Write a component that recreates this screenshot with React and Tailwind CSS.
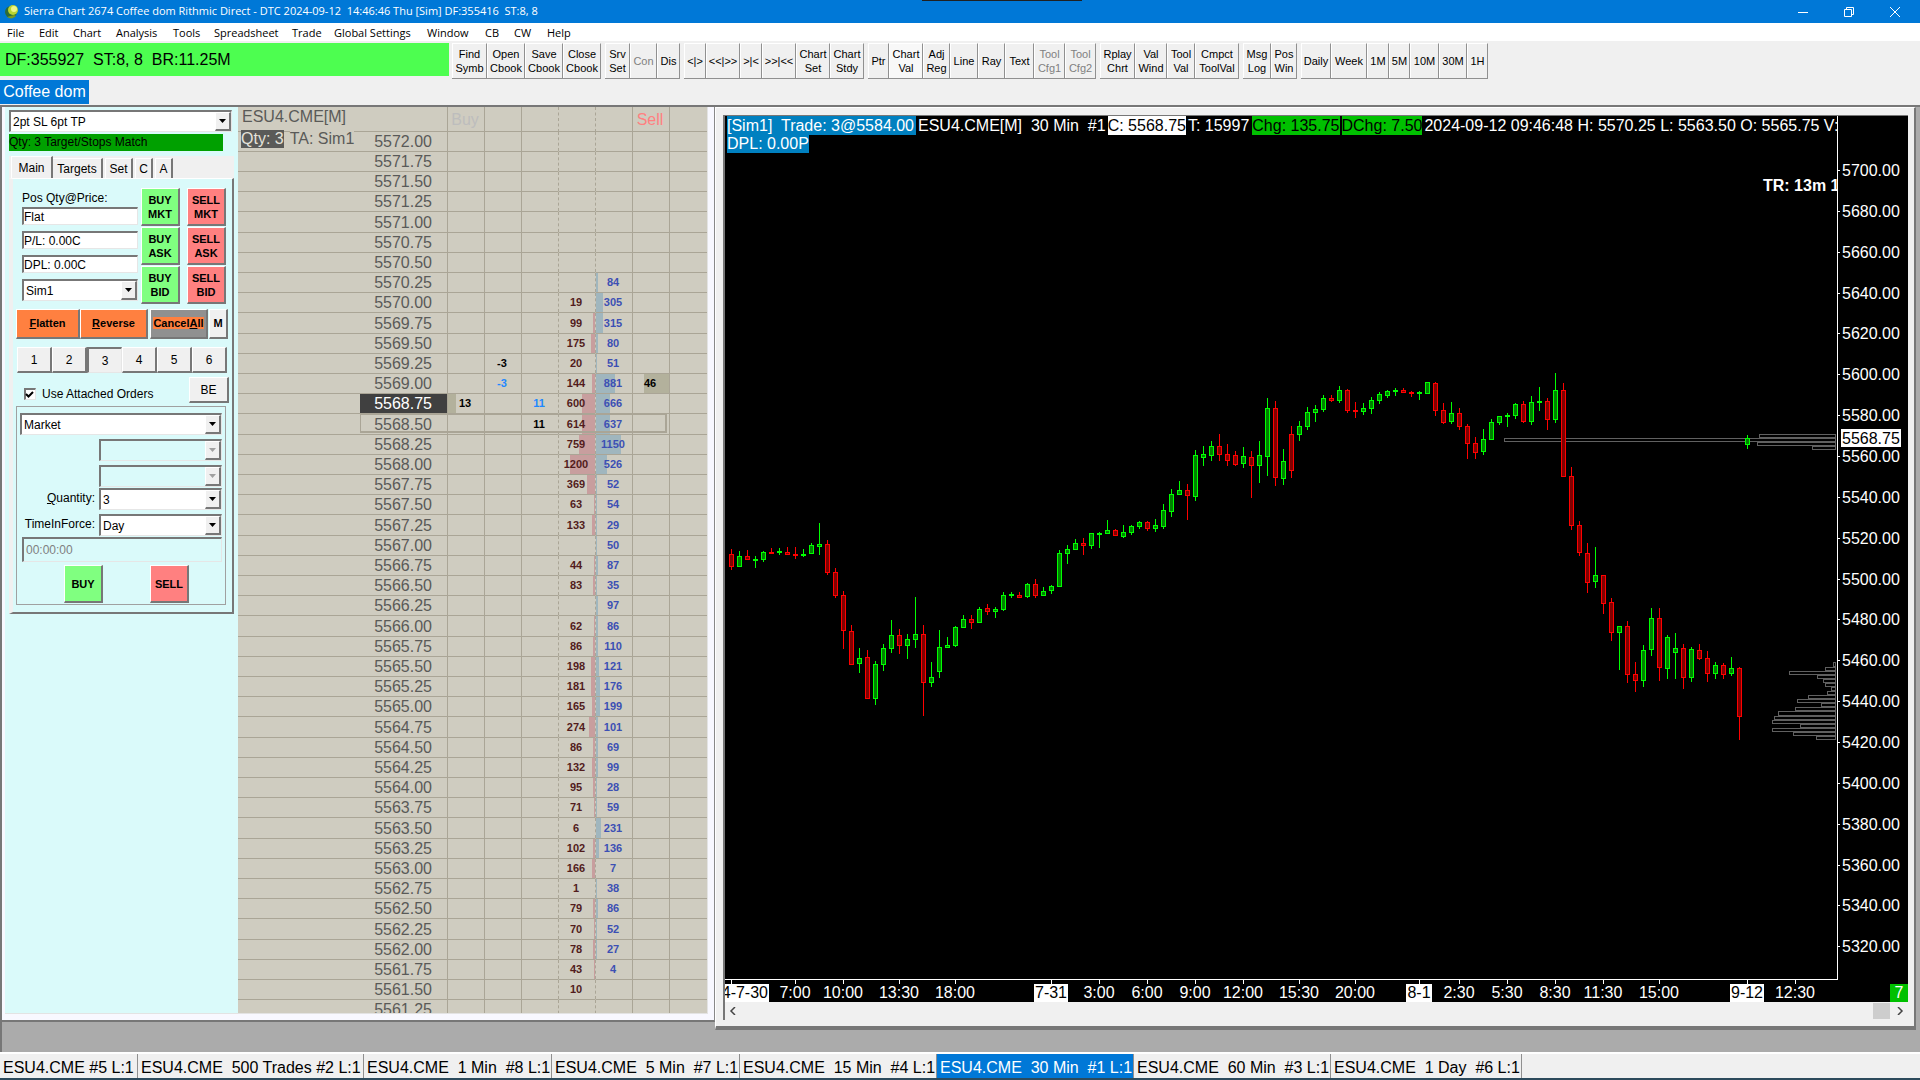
import clsx from "clsx";

const MENU = [
  ["File", "w-8"],
  ["Edit", "w-[34px]"],
  ["Chart", "w-[43px]"],
  ["Analysis", "w-[57px]"],
  ["Tools", "w-[41px]"],
  ["Spreadsheet", "w-[78px]"],
  ["Trade", "w-[42px]"],
  ["Global Settings", "w-[93px]"],
  ["Window", "w-[58px]"],
  ["CB", "w-[29px]"],
  ["CW", "w-[33px]"],
  ["Help", "w-10"],
];

const TOOLBAR = [
  [
    ["Find Symb", "w-[35px]"],
    ["Open Cbook", "w-[38px]"],
    ["Save Cbook", "w-[38px]"],
    ["Close Cbook", "w-[38px]"],
  ],
  [
    ["Srv Set", "w-[25px]"],
    ["Con", "w-[27px]", "off"],
    ["Dis", "w-[23px]"],
  ],
  [
    ["<|>", "w-[22px]"],
    ["<<|>>", "w-[34px]"],
    [">|<", "w-[22px]"],
    [">>|<<", "w-[34px]"],
    ["Chart Set", "w-[34px]"],
    ["Chart Stdy", "w-[34px]"],
  ],
  [
    ["Ptr", "w-[21px]"],
    ["Chart Val", "w-[34px]", "on"],
    ["Adj Reg", "w-[27px]"],
    ["Line", "w-7"],
    ["Ray", "w-[27px]"],
    ["Text", "w-[29px]"],
    ["Tool Cfg1", "w-[31px]", "off"],
    ["Tool Cfg2", "w-[31px]", "off"],
  ],
  [
    ["Rplay Chrt", "w-[35px]"],
    ["Val Wind", "w-8"],
    ["Tool Val", "w-7"],
    ["Cmpct ToolVal", "w-11"],
  ],
  [
    ["Msg Log", "w-7"],
    ["Pos Win", "w-[26px]"],
  ],
  [
    ["Daily", "w-[30px]"],
    ["Week", "w-9"],
    ["1M", "w-[22px]"],
    ["5M", "w-[21px]"],
    ["10M", "w-[29px]"],
    ["30M", "w-7"],
    ["1H", "w-[21px]"],
  ],
];

// one entry per quarter point, from 5572.00 down: [bid size, ask size]
const DEPTH = [
  [], [], [], [], [], [], [],
  [null, 84], [19, 305], [99, 315], [175, 80], [20, 51], [144, 881], [600, 666], [614, 637],
  [759, 1150], [1200, 526], [369, 52], [63, 54], [133, 29], [null, 50], [44, 87], [83, 35],
  [null, 97], [62, 86], [86, 110], [198, 121], [181, 176], [165, 199], [274, 101], [86, 69],
  [132, 99], [95, 28], [71, 59], [6, 231], [102, 136], [166, 7], [1, 38], [79, 86],
  [70, 52], [78, 27], [43, 4], [10, null], [],
];

// [up, high, body top, body bottom, low] in plot pixels
const CANDLES = [
  [0, 433, 438, 451, 454], [1, 435, 440, 451, 451], [0, 434, 440, 444, 444], [1, 440, 443, 444, 452],
  [1, 435, 436, 444, 446], [0, 432, 436, 437, 438], [1, 432, 435, 437, 439], [0, 431, 436, 439, 439],
  [0, 431, 438, 440, 443], [1, 433, 438, 440, 441], [1, 427, 429, 438, 438], [1, 407, 428, 431, 439],
  [0, 424, 428, 457, 459], [0, 452, 456, 480, 482], [0, 475, 479, 515, 533], [0, 509, 515, 549, 549],
  [1, 532, 542, 548, 557], [0, 534, 541, 583, 583], [1, 545, 548, 583, 589], [1, 528, 532, 549, 555],
  [1, 504, 519, 533, 537], [0, 513, 519, 530, 538], [1, 518, 523, 530, 543], [1, 481, 518, 524, 532],
  [0, 509, 518, 567, 600], [1, 546, 561, 567, 571], [1, 514, 531, 556, 562], [1, 521, 529, 532, 532],
  [1, 510, 511, 530, 531], [1, 499, 503, 512, 512], [0, 499, 503, 507, 513], [1, 491, 493, 507, 507],
  [0, 488, 492, 496, 499], [1, 491, 493, 496, 502], [1, 476, 479, 494, 495], [1, 476, 478, 479, 482],
  [0, 476, 479, 482, 482], [1, 467, 468, 481, 482], [0, 463, 468, 480, 482], [1, 471, 475, 480, 480],
  [1, 469, 470, 475, 478], [1, 434, 437, 471, 471], [1, 429, 433, 438, 448], [1, 423, 427, 434, 434],
  [0, 422, 427, 430, 439], [1, 417, 417, 430, 433], [1, 416, 417, 419, 432], [1, 404, 414, 418, 418],
  [0, 413, 414, 420, 420], [1, 409, 416, 421, 422], [1, 409, 410, 417, 419], [1, 405, 406, 411, 413],
  [0, 405, 406, 413, 415], [1, 403, 409, 413, 416], [1, 388, 394, 411, 413], [1, 373, 378, 396, 401],
  [1, 365, 374, 379, 379], [0, 368, 374, 380, 404], [1, 334, 339, 381, 385], [1, 330, 338, 342, 350],
  [1, 325, 330, 340, 345], [0, 318, 330, 339, 345], [0, 328, 338, 345, 350], [0, 335, 339, 349, 350],
  [1, 331, 340, 348, 352], [0, 335, 341, 350, 382], [1, 325, 339, 350, 367], [1, 282, 292, 341, 360],
  [0, 285, 292, 362, 370], [1, 333, 345, 363, 369], [0, 310, 318, 355, 362], [1, 305, 310, 319, 325],
  [1, 291, 296, 311, 314], [1, 289, 293, 297, 306], [1, 279, 282, 294, 296], [0, 279, 282, 285, 286],
  [1, 270, 274, 285, 287], [0, 273, 274, 295, 297], [0, 286, 294, 295, 302], [1, 287, 292, 296, 299],
  [1, 281, 284, 293, 298], [1, 276, 278, 285, 288], [1, 274, 275, 280, 282], [1, 272, 274, 276, 280],
  [0, 272, 274, 277, 277], [0, 275, 276, 278, 281], [1, 275, 276, 278, 284], [1, 266, 266, 278, 278],
  [0, 266, 267, 295, 300], [0, 287, 294, 307, 308], [1, 286, 297, 306, 308], [0, 292, 297, 311, 314],
  [0, 308, 310, 328, 343], [0, 321, 327, 337, 343], [1, 313, 323, 336, 339], [1, 303, 306, 324, 324],
  [1, 300, 300, 307, 309], [1, 297, 299, 301, 311], [1, 287, 288, 300, 303], [0, 285, 288, 306, 307],
  [1, 280, 286, 306, 309], [1, 271, 285, 287, 295], [0, 282, 285, 304, 314], [1, 257, 274, 304, 307],
  [0, 267, 274, 361, 361], [0, 351, 360, 410, 414], [0, 405, 409, 437, 440], [0, 427, 437, 467, 477],
  [1, 431, 459, 466, 472], [0, 459, 459, 488, 498], [0, 482, 486, 517, 525], [1, 510, 510, 517, 554],
  [0, 505, 510, 559, 567], [0, 546, 558, 565, 576], [1, 529, 534, 565, 571], [1, 492, 502, 534, 540],
  [0, 492, 502, 552, 565], [1, 519, 521, 553, 563], [1, 517, 532, 537, 563], [0, 528, 532, 562, 573],
  [1, 531, 533, 562, 566], [0, 528, 534, 543, 544], [0, 535, 542, 558, 566], [1, 546, 549, 558, 563],
  [0, 547, 549, 559, 563], [1, 541, 552, 558, 560], [0, 551, 552, 601, 624], [1, 319, 322, 329, 333],
];

// volume at price, [y, width, height]
const PROFILE = [
  [318, 76, 3], [322, 331, 3], [326, 78, 3], [330, 23, 3],
  [546, 2, 4], [551, 10, 3], [555, 46, 3], [559, 18, 3], [563, 12, 3], [567, 10, 3], [571, 4, 3],
  [575, 8, 3], [579, 27, 3], [583, 38, 3], [587, 14, 3], [591, 40, 3], [595, 57, 4], [600, 61, 3],
  [604, 63, 3], [608, 35, 3], [612, 63, 3], [616, 42, 3], [620, 19, 3],
];

const TIMES = [
  ["7:00", 70], ["10:00", 118], ["13:30", 174], ["18:00", 230], ["7-31", 326, true], ["3:00", 374],
  ["6:00", 422], ["9:00", 470], ["12:00", 518], ["15:30", 574], ["20:00", 630], ["8-1", 694, true],
  ["2:30", 734], ["5:30", 782], ["8:30", 830], ["11:30", 878], ["15:00", 934], ["9-12", 1022, true],
  ["12:30", 1070],
];

const WINDOWS = [
  ["ESU4.CME #5 L:1", "w-[138px]"],
  ["ESU4.CME  500 Trades #2 L:1", "w-[226px]"],
  ["ESU4.CME  1 Min  #8 L:1", "w-[188px]"],
  ["ESU4.CME  5 Min  #7 L:1", "w-[188px]"],
  ["ESU4.CME  15 Min  #4 L:1", "w-[197px]"],
  ["ESU4.CME  30 Min  #1 L:1", "w-[197px]"],
  ["ESU4.CME  60 Min  #3 L:1", "w-[197px]"],
  ["ESU4.CME  1 Day  #6 L:1", "w-[191px]"],
];

const RAISED = "border-t border-l border-b-2 border-r-2 border-t-white border-l-white border-b-[#777] border-r-[#777]";
const SUNKEN = "border-t-2 border-l-2 border-b border-r border-t-[#777] border-l-[#777] border-b-[#e6e6e6] border-r-[#e6e6e6]";

function TitleBar() {
  return (
    <header className="relative flex h-[23px] shrink-0 items-center bg-[#0078d7] pr-0.5 font-['Open_Sans',sans-serif] text-[11px] text-white">
      <div className="absolute top-0 left-[48%] h-px w-[160px] bg-[#202020]" />
      <svg className="mr-1 ml-1 size-4" viewBox="0 0 16 16">
        <circle cx="7" cy="8" r="6" fill="#2c6b3a" />
        <circle cx="9" cy="6" r="5" fill="#b9d432" />
        <circle cx="10" cy="5" r="3" fill="#eef58a" />
        <path d="M3 13c3 2 6 2 9-1l-2-1z" fill="#7a9a20" />
      </svg>
      <h1 className="flex-1 whitespace-pre">
        Sierra Chart 2674 Coffee dom Rithmic Direct - DTC 2024-09-12  14:46:46 Thu [Sim] DF:355416  ST:8, 8
      </h1>
      <button aria-label="Minimize" className="flex w-[46px] justify-center">
        <svg className="size-3" viewBox="0 0 12 12" stroke="white" fill="none"><path d="M1 6.5h10" /></svg>
      </button>
      <button aria-label="Restore" className="flex w-[46px] justify-center">
        <svg className="size-3" viewBox="0 0 12 12" stroke="white" fill="none">
          <path d="M1.5 3.5h7v7h-7zM3.5 3.5v-2h7v7h-2" />
        </svg>
      </button>
      <button aria-label="Close" className="flex w-[46px] justify-center">
        <svg className="size-3" viewBox="0 0 12 12" stroke="white" fill="none"><path d="M1 1l10 10M11 1L1 11" /></svg>
      </button>
    </header>
  );
}

function ToolBar() {
  return (
    <div className="flex h-[39px] shrink-0 items-start gap-1 pt-0.5">
      <div className="-mr-px flex h-[33px] w-[449px] items-center bg-[#4dfe50] pt-px pl-[5px] text-base whitespace-pre">
        DF:355927  ST:8, 8  BR:11.25M
      </div>
      {TOOLBAR.map((group, i) => (
        <div key={i} className="flex h-9 border-b border-[#909090]">
          {group.map(([label, width, state]) => (
            <button
              key={label}
              disabled={state === "off"}
              className={clsx(
                "border-t border-r border-l border-t-white border-r-[#909090] border-l-white text-center text-[11px] leading-[14px]",
                width,
                state === "off" && "text-[#808080]",
                state === "on" && "bg-[#f8f8f8]"
              )}
            >
              {label.split(" ").map((word) => (
                <span key={word} className="-mx-1 block">{word}</span>
              ))}
            </button>
          ))}
        </div>
      ))}
    </div>
  );
}

function Combo({ id, label, value, disabled, className }) {
  return (
    <div className={clsx("relative h-[22px]", SUNKEN, disabled ? "bg-[#dafafa]" : "bg-white", className)}>
      <select
        id={id}
        aria-label={label}
        disabled={disabled}
        defaultValue={value}
        className="block h-full w-full appearance-none bg-transparent pl-0.5 text-xs outline-none"
      >
        <option>{value}</option>
      </select>
      <span className={clsx("pointer-events-none absolute top-0 right-0 flex h-full w-4 items-center justify-center bg-[#f0f0f0]", RAISED)}>
        <svg className="h-1 w-[7px]" viewBox="0 0 7 4"><path d="M0 0h7L3.5 4z" fill={disabled ? "#a0a0a0" : "#000"} /></svg>
      </span>
    </div>
  );
}

function TradeButton({ lines, sell }) {
  return (
    <button className={clsx("h-[38px] w-[39px] text-center text-[11px] leading-[14px] font-bold", RAISED, sell ? "bg-[#ff8080]" : "bg-[#80ff80]")}>
      {lines.map((line) => (
        <span key={line} className="block">{line}</span>
      ))}
    </button>
  );
}

function Readout({ label, value }) {
  return <input aria-label={label} defaultValue={value} readOnly className={clsx("h-[18px] w-[116px] bg-white text-xs outline-none", SUNKEN)} />;
}

function TradePanel() {
  return (
    <aside className="w-[233px] shrink-0 bg-[#dafafa] pt-[3px] pl-1 text-xs">
      <Combo label="Trade configuration" value="2pt SL 6pt TP" className="w-[223px]" />
      <div className="mt-0.5 h-[17px] w-[214px] bg-[#00a000] leading-[17px]">Qty: 3 Target/Stops Match</div>

      <div className="mt-[5px] flex h-[22px] w-[225px] items-end bg-[#f0f0f0] pl-0.5">
        <button className="h-[22px] w-[42px] border-t border-r-2 border-l border-t-white border-r-[#777] border-l-white">Main</button>
        <button className="mr-0.5 h-5 w-[50px] border-t border-r-2 border-t-white border-r-[#777] pt-px">Targets</button>
        <button className="mr-0.5 h-5 w-7 border-t border-r-2 border-l border-t-white border-r-[#777] border-l-white pt-px">Set</button>
        <button className="mr-0.5 h-5 w-[18px] border-t border-r-2 border-l border-t-white border-r-[#777] border-l-white pt-px">C</button>
        <button className="h-5 w-[18px] border-t border-r-2 border-l border-t-white border-r-[#777] border-l-white pt-px">A</button>
      </div>

      <div className="h-[436px] w-[225px] border-t border-r-2 border-b-2 border-l-4 border-t-white border-r-[#777] border-b-[#777] border-l-[#f0f0f0] pt-[9px] pl-[3px]">
        <div className="flex pl-1.5">
          <div className="w-[119px] pt-px">
            <label htmlFor="pos" className="block h-[18px] leading-[18px]">Pos Qty@Price:</label>
            <input id="pos" readOnly defaultValue="Flat" className={clsx("mb-1.5 block h-[18px] w-[116px] bg-white text-xs outline-none", SUNKEN)} />
            <div className="flex flex-col gap-1.5">
              <Readout label="Profit and loss" value="P/L: 0.00C" />
              <Readout label="Daily profit and loss" value="DPL: 0.00C" />
              <Combo label="Account" value="Sim1" className="w-[116px]" />
            </div>
          </div>
          <div className="grid grid-cols-2 gap-x-[7px] gap-y-px">
            <TradeButton lines={["BUY", "MKT"]} />
            <TradeButton sell lines={["SELL", "MKT"]} />
            <TradeButton lines={["BUY", "ASK"]} />
            <TradeButton sell lines={["SELL", "ASK"]} />
            <TradeButton lines={["BUY", "BID"]} />
            <TradeButton sell lines={["SELL", "BID"]} />
          </div>
        </div>

        <div className="mt-[5px] flex h-[30px] text-[11px] font-bold">
          <button className={clsx("w-16 bg-[#ff8040]", RAISED)}><u>F</u>latten</button>
          <button className={clsx("mr-0.5 w-[68px] bg-[#ff8040]", RAISED)}><u>R</u>everse</button>
          <button className={clsx("mr-px w-[58px] bg-[#909090]", RAISED)}><span className="-mx-1 bg-[#ff8040]">Cancel<u>A</u>ll</span></button>
          <button className={clsx("w-[19px] bg-[#f0f0f0]", RAISED)}>M</button>
        </div>

        <div className="mt-2 flex h-[26px] pl-px">
          {[1, 2, 3, 4, 5, 6].map((n) => (
            <button key={n} className={clsx("w-[35px] bg-[#f0f0f0]", n === 3 ? SUNKEN : RAISED)}>{n}</button>
          ))}
        </div>

        <div className="mt-1 flex h-[27px] items-start pl-2">
          <label className="mt-[9px] flex flex-1 items-center gap-1.5">
            <input type="checkbox" defaultChecked className={clsx("peer size-3 appearance-none bg-white", SUNKEN)} />
            <svg className="pointer-events-none -ml-[17px] size-[9px]" viewBox="0 0 9 9" fill="none" stroke="black" strokeWidth="2"><path d="M1 4l2.500 2.500L8 2" /></svg>
            <span className="ml-0.5">Use Attached Orders</span>
          </label>
          <button className={clsx("mr-[3px] h-[26px] w-10 bg-[#f0f0f0]", RAISED)}>BE</button>
        </div>

        <div className="mt-0.5 h-[199px] w-[210px] border border-[#a0a0a0] pt-1.5 pl-[3px]">
          <Combo label="Order type" value="Market" className="w-[202px]" />
          <div className="mt-1 flex flex-col gap-1">
            <Combo label="Price 1" value="" disabled className="ml-[79px] w-[123px]" />
            <Combo label="Price 2" value="" disabled className="ml-[79px] w-[123px]" />
          </div>
          <div className="mt-px flex">
            <label htmlFor="qty" className="w-[79px] pr-1 text-right leading-5"><u>Q</u>uantity:</label>
            <Combo id="qty" value="3" className="w-[123px]" />
          </div>
          <div className="mt-1 flex">
            <label htmlFor="tif" className="w-[79px] pr-1 text-right leading-5">TimeInForce:</label>
            <Combo id="tif" value="Day" className="w-[123px]" />
          </div>
          <input aria-label="Time" disabled defaultValue="00:00:00" className={clsx("mt-px ml-0.5 block h-[25px] w-[200px] bg-[#dafafa] pl-0.5 text-xs text-[#808080]", SUNKEN)} />
          <div className="mt-[3px] flex gap-[47px] pl-11">
            <TradeButton lines={["BUY"]} />
            <TradeButton sell lines={["SELL"]} />
          </div>
        </div>
      </div>
    </aside>
  );
}

function DepthRow({ index }) {
  const [bid, ask] = DEPTH[index];
  const price = 5572 - index / 4;
  const last = price === 5568.75;
  const cell = "relative border-r border-b border-[#aaa596] py-0 pl-0";
  const solid = clsx(cell, "pr-0.5");
  const dashed = clsx(cell, "border-r-transparent pr-0.5 after:absolute after:inset-y-0 after:-right-px after:border-r after:border-dashed after:border-[#aaa596]");
  return (
    <tr className={index % 5 === 4 ? "h-[21px]" : "h-5"}>
      <th className={clsx(cell, "pr-0 text-right text-base leading-[19px] font-normal text-[#5a5a58]")}>
        <span className={clsx("ml-[122px] block pr-[15px]", last && "bg-[#404040] text-white")}>{price.toFixed(2)}</span>
      </th>
      <td className={solid}>
        {last && <span className="absolute inset-y-0 left-0 w-2 bg-[#b3b19c]" />}
        {last && <span className="relative">13</span>}
      </td>
      <td className={clsx(solid, price === 5569 && "text-[#1e88ff]")}>{(price === 5569.25 || price === 5569) && "-3"}</td>
      <td className={clsx(dashed, last && "text-[#1e88ff]")}>{(last || price === 5568.5) && "11"}</td>
      <td className={clsx(dashed, "text-[#521c1c]")}>
        <span className="absolute inset-y-0 right-0 bg-[#c89e9e]" style={{ width: Math.round((bid || 0) / 48) }} />
        <span className="relative">{bid}</span>
      </td>
      <td className={clsx(solid, "text-[#3c50b4]")}>
        <span className="absolute inset-y-0 left-0 bg-[#a0b6be]" style={{ width: Math.round((ask || 0) / 46) }} />
        <span className="relative">{ask}</span>
      </td>
      <td className={solid}>
        {price === 5569 && <span className="absolute inset-y-0 right-0 w-[25px] bg-[#b3b19c]" />}
        {price === 5569 && <span className="relative">46</span>}
      </td>
      <td className="border-b border-[#aaa596] p-0" />
    </tr>
  );
}

function DepthLadder() {
  return (
    <div className="relative min-w-0 flex-1 overflow-hidden bg-[#cfccc0]">
      <table className="w-full table-fixed border-separate border-spacing-0 text-center text-[11px] leading-[19px] font-bold">
        <thead>
          <tr className="h-[25px] text-base font-normal">
            <th className="w-[210px] border-r border-b border-[#aaa596] p-0 pl-1 text-left align-top leading-5 font-normal text-[#5a5a58]">ESU4.CME[M]</th>
            <th className="w-[37px] border-r border-b border-[#aaa596] p-0 pt-0.5 pr-0.5 leading-5 font-normal text-[#bdbdbd]">Buy</th>
            <th className="w-[37px] border-r border-b border-[#aaa596]" />
            <th className="w-[37px] border-r border-b border-[#aaa596] [border-right-style:dashed]" />
            <th className="w-[37px] border-r border-b border-[#aaa596] [border-right-style:dashed]" />
            <th className="w-[37px] border-r border-b border-[#aaa596]" />
            <th className="w-[37px] border-r border-b border-[#aaa596] p-0 pt-0.5 pr-0.5 leading-5 font-normal text-[#ff8080]">Sell</th>
            <th className="border-b border-[#aaa596]" />
          </tr>
        </thead>
        <tbody>
          {DEPTH.map((_, i) => (
            <DepthRow key={i} index={i} />
          ))}
        </tbody>
      </table>
      <div className="absolute top-[23px] left-[3px] flex gap-1.5 text-base leading-[18px] text-[#5a5a58]">
        <span className="bg-[#5a5a58] text-[#e4e2da]">Qty: 3</span>
        <span className="bg-[#cfccc0]">TA: Sim1</span>
      </div>
      <div className="pointer-events-none absolute top-[307px] left-[122px] h-[19px] w-[307px] border border-r-2 border-b-2 border-[#aaa596]" />
    </div>
  );
}

function Chart() {
  const prices = Array.from({ length: 20 }, (_, i) => 5700 - i * 20);
  return (
    <div className="relative min-h-0 flex-1 overflow-hidden bg-black">
      <svg className="absolute inset-0 h-full w-full font-['Liberation_Sans',sans-serif] text-base" fill="white" shapeRendering="crispEdges">
        {PROFILE.map(([y, w, h]) => (
          <rect key={y} x={1110.5 - w} y={y + 0.5} width={w} height={h} fill="none" stroke="#606060" />
        ))}
        {CANDLES.map(([up, high, top, bottom, low], i) => (
          <g key={i} fill={up ? "#008000" : "#800000"} stroke={up ? "#00ff00" : "#ff0000"}>
            <path d={`M${6.5 + i * 8} ${high}V${low}`} />
            <rect x={4.5 + i * 8} y={top + 0.5} width="4" height={Math.max(bottom - top - 1, 0.5)} />
          </g>
        ))}
        <text x="1038" y="75" fontWeight="bold">TR: 13m 1</text>
        <rect x="1113" y="0" width="80" height="864" fill="black" />
        <path d="M1112.500 0V864M0 863.500H1113" stroke="white" />
        {prices.map((price) => {
          const y = Math.round(54 + (5700 - price) * 2.043);
          return (
            <g key={price}>
              <path d={`M1113 ${y + 0.5}h2`} stroke="white" />
              <text x="1117" y={y + 6}>{price.toFixed(2)}</text>
            </g>
          );
        })}
        <rect x="1116" y="313" width="60" height="18" />
        <text x="1117" y="328" fill="black">5568.75</text>
        <path d="M6.500 864v4" stroke="white" />
        <rect x="0" y="868" width="44" height="18" />
        <text x="43" y="882" textAnchor="end" fill="black">24-7-30</text>
        {TIMES.map(([label, x, day]) => (
          <g key={label + x}>
            <path d={`M${x + 0.5} 864v4`} stroke="white" />
            {day && <rect x={x - label.length * 4 - 1} y="868" width={label.length * 8 + 2} height="18" />}
            <text x={x} y="882" textAnchor="middle" fill={day ? "black" : "white"}>{label}</text>
          </g>
        ))}
        <rect x="1165" y="868" width="18" height="18" fill="#00c000" />
        <text x="1174" y="882" textAnchor="middle">7</text>
      </svg>
      <div className="absolute top-0 left-0.5 flex w-[1112px] flex-col items-start text-base leading-[18px] whitespace-pre text-white">
        <p className="flex gap-0.5">
          <span className="bg-[#0080c0] pt-px pr-0.5">[Sim1]  Trade: 3@5584.00</span>
          <span className="pt-px">ESU4.CME[M]  30 Min  #1</span>
          <span className="bg-white pt-px text-black">C: 5568.75</span>
          <span className="pt-px pr-px">T: 15997</span>
          <span className="bg-[#00c000] pt-px text-black">Chg: 135.75</span>
          <span className="bg-[#00c000] pt-px text-black">DChg: 7.50</span>
          <span className="pt-px">2024-09-12 09:46:48 H: 5570.25 L: 5563.50 O: 5565.75 V:</span>
        </p>
        <p className="bg-[#0080c0]">DPL: 0.00P</p>
      </div>
    </div>
  );
}

export default function App() {
  return (
    <div className="flex h-screen flex-col overflow-hidden bg-[#f0f0f0] font-['Liberation_Sans',Arial,sans-serif] text-black">
      <TitleBar />
      <nav className="flex h-[18px] shrink-0 items-center bg-white pt-px pl-[7px] font-['Open_Sans',sans-serif] text-[11px] leading-[18px]">
        {MENU.map(([label, width]) => (
          <button key={label} className={clsx("text-left whitespace-nowrap", width)}>{label}</button>
        ))}
      </nav>
      <ToolBar />
      <div className="h-[25px] shrink-0">
        <button className="h-6 w-[89px] bg-[#0078d7] text-base text-white">Coffee dom</button>
      </div>

      <main className="flex min-h-0 flex-1 items-start border-t-2 border-l-2 border-t-[#777] border-l-[#777] bg-[#ababab] pr-1">
        <section className="flex h-[calc(100%-30px)] w-[713px] shrink-0 flex-col border-r border-b-2 border-r-[#888] border-b-[#777] bg-[#f8f8ff] pr-1.5 pb-1.5 pl-[3px]">
          <div className="flex min-h-0 flex-1 border-r border-b border-[#e3e3e3]">
            <TradePanel />
            <DepthLadder />
          </div>
        </section>
        <section className="flex h-[calc(100%-22px)] min-w-0 flex-1 flex-col border-t border-r-2 border-b-4 border-l border-t-white border-r-[#777] border-b-[#777] border-l-white bg-[#f0f0f0] pt-[7px] pr-1.5 pb-1.5 pl-[7px]">
          <div className="flex min-h-0 flex-1 flex-col border-t border-l-2 border-[#777]">
            <Chart />
            <div className="flex h-[18px] shrink-0 items-center justify-between px-1">
              <svg className="size-2" viewBox="0 0 8 8" fill="none" stroke="#444" strokeWidth="1.5"><path d="M6 0L2 4l4 4" /></svg>
              <div className="flex h-full items-center gap-1.5">
                <div className="h-4 w-[17px] bg-[#cdcdcd]" />
                <svg className="size-2" viewBox="0 0 8 8" fill="none" stroke="#444" strokeWidth="1.5"><path d="M2 0l4 4-4 4" /></svg>
              </div>
            </div>
          </div>
        </section>
      </main>

      <nav className="flex h-[26px] shrink-0 border-t-2 border-white text-base">
        {WINDOWS.map(([label, width], i) => (
          <button
            key={label}
            className={clsx("border-r border-[#909090] pt-0.5 pl-[3px] text-left whitespace-pre", width, i === 5 && "bg-[#0078d7] text-white")}
          >
            {label}
          </button>
        ))}
      </nav>
      <div className="h-0.5 shrink-0 bg-[#2c4a5c]" />
    </div>
  );
}
